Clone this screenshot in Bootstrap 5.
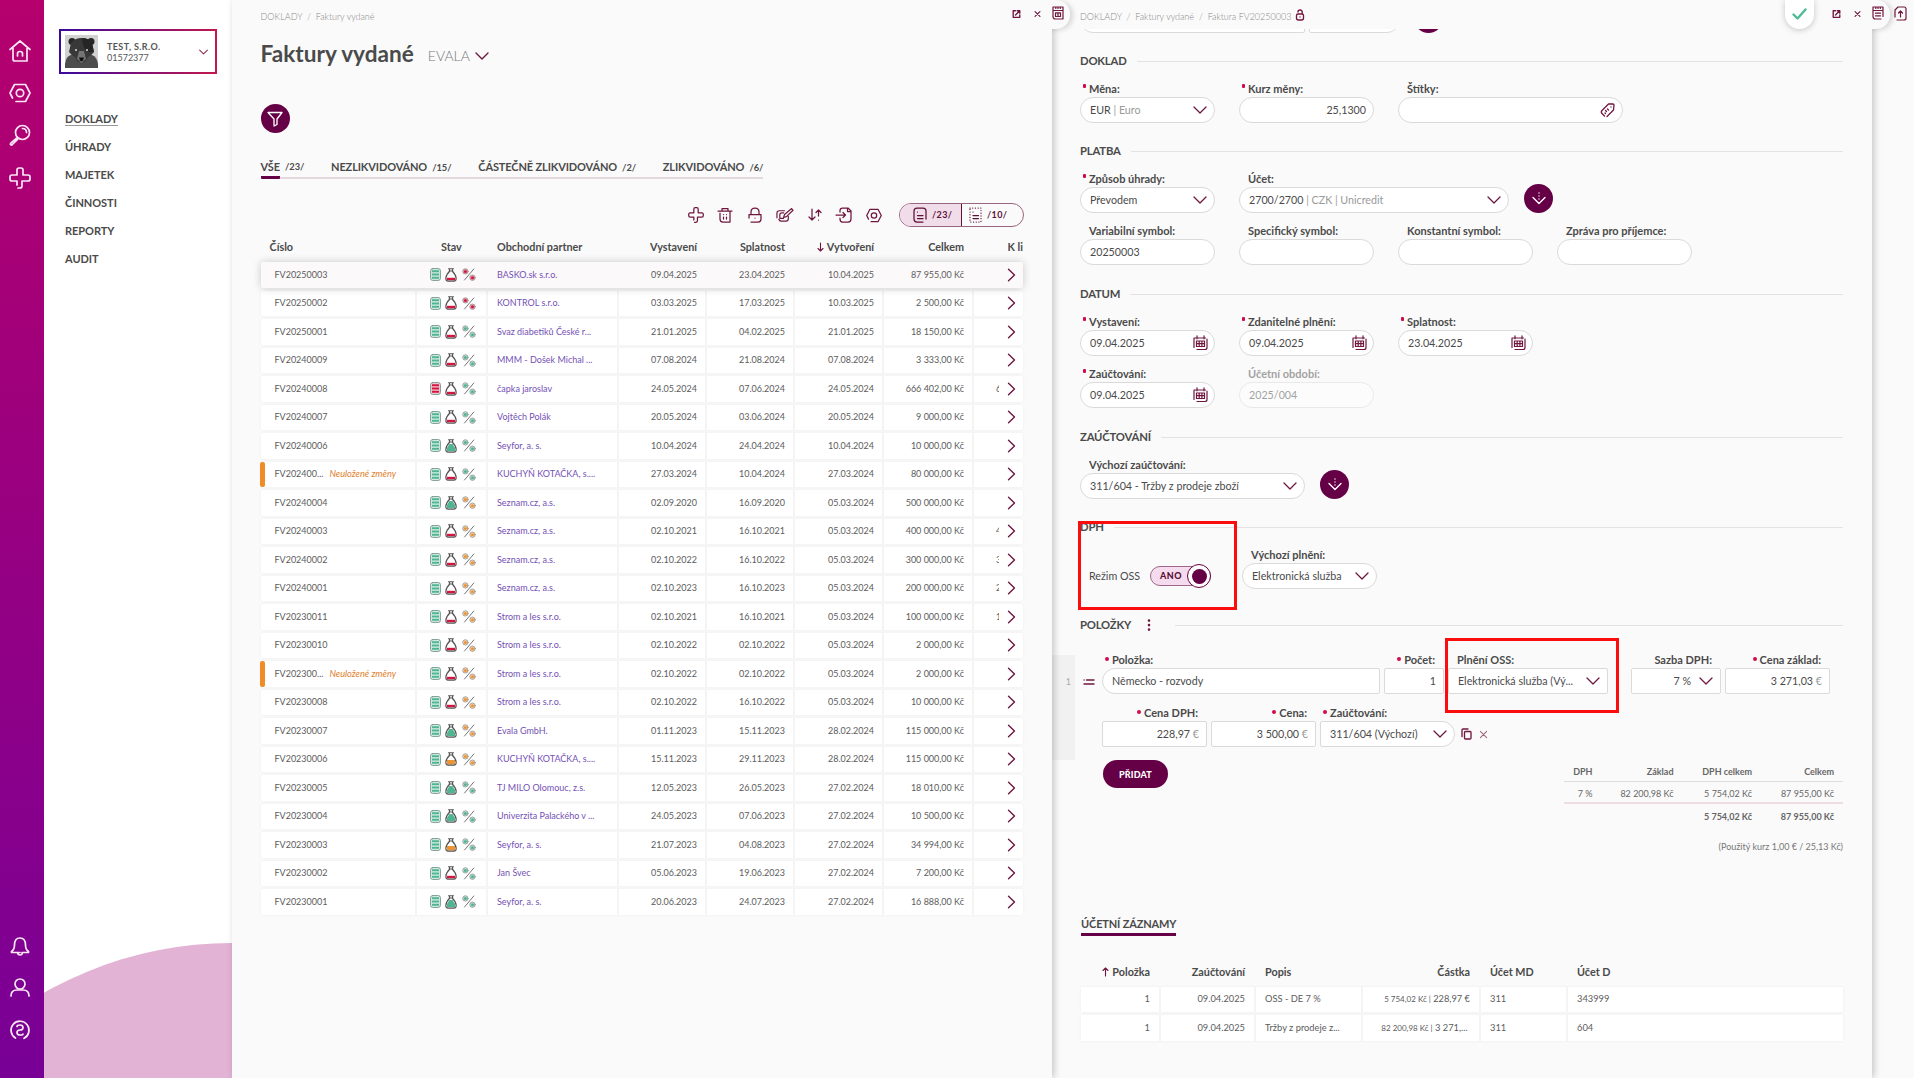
<!DOCTYPE html>
<html lang="cs">
<head>
<meta charset="utf-8">
<meta name="viewport" content="width=device-width, initial-scale=1">
<title>Faktury vydané</title>
<link href="https://cdn.jsdelivr.net/npm/bootstrap@5.3.0/dist/css/bootstrap.min.css" rel="stylesheet">
<style>
:root{--plum:#660046;--wine:#70173f;--ink:#4a4a4a;--pink:#d10a50}
body{font-family:Lato,"Open Sans",sans-serif;font-size:10.7px;line-height:16px;color:var(--ink);background:#fafafa;height:1078px;overflow:hidden}
svg{display:block;flex:none;fill:none;stroke:currentColor;stroke-width:1.35;stroke-linecap:round;stroke-linejoin:round}
.wine{color:var(--wine)}
.rail{width:44px;padding:40px 0 38px 9px;background:linear-gradient(180deg,#b5006d,#780096);color:#fbe6f6}
.rail svg{stroke-width:1.7}
.rail .top{gap:21px}.rail .bottom{gap:22px}
.side{width:188px;background:#fff;overflow:hidden}
.side .arc{width:760px;height:760px;border-radius:50%;background:#e3b3d6;left:-192px;top:943px}
.firm{width:158px;height:45px;margin:29px 0 0 15px;padding:4px 7px 4px 4px;border:2px solid;border-image:linear-gradient(90deg,#3a0a9c,#c3184e) 1;font-size:9px;line-height:11px;color:#555}
.firm b{letter-spacing:.4px}
.firm .who{margin-left:9px}
.firm .arrow{color:#8d3357;stroke-width:1.7}
.bear{stroke:none}
.menu{margin:34px 0 0 21px}
.menu a{font-size:11px;font-weight:700;letter-spacing:-.05px;color:var(--ink);text-decoration:none;height:28px;padding-top:3px}
.menu a.active span{border-bottom:1px solid #999}
.pane{width:820px;background:#fafafa;box-shadow:2px 0 7px rgba(0,0,0,.22)}
.z3{z-index:3}.z2{z-index:2}
.crumb{font-size:9px;font-weight:300;color:#888;height:34px;line-height:34px}
.corner{top:0;right:-18px;width:22px;height:29px;border-radius:0 14px 14px 0;background:#fafafa;box-shadow:3px 1px 5px rgba(0,0,0,.14);color:var(--wine);padding:6px 0 0 4px;clip-path:inset(0 -9px -9px 4px)}
.corner svg,.nexttab svg{stroke-width:1.2}
.acts{top:8px;right:11px;gap:13px;color:var(--wine)}
.okflag{top:0;right:58px;width:29px;height:29px;border-radius:0 0 15px 15px;background:#fff;box-shadow:0 1px 6px rgba(0,0,0,.22);color:#4dbb93;padding:7px 0 0 7px}
.okflag svg{stroke-width:2.4}
.nexttab{padding:6px 0 0 22px}
.list-pane{padding:0 28px 0 28.5px}
.titlebar{padding-top:5px;height:36px}
h1{font-size:22.6px;font-weight:700;line-height:28px;margin:0 0 2px}
.view{font-size:14px;font-weight:300;color:#777;margin-left:14px;padding-top:2px}
.titlebar svg{margin:2px 0 0 5px}
.round{width:29px;height:29px;border-radius:50%;background:var(--plum);color:#fff;flex:none}
.filter{margin-top:34px}
.after{margin-left:-9px}
.tabs{margin-top:25px;gap:26.7px;border-bottom:2px solid #e4d9df;font-size:11px;font-weight:700;letter-spacing:-.13px;width:max-content;height:21px;line-height:17px;white-space:nowrap}
.tabs small{font-size:9.3px;margin-left:5px;letter-spacing:0}
.tabs .on{border-bottom:3px solid var(--plum);height:21px;border-radius:1px}
.tools{gap:13.5px;color:var(--wine);height:24px;margin-top:24px}
.tools svg{stroke-width:1.25}
.tools .thick{stroke-width:1.75}
.seg{width:125px;height:24px;border:1px solid #9a6580;border-radius:12px;overflow:hidden;font-size:9px;font-weight:700;color:#5e1038;margin-left:4px;letter-spacing:.4px}
.seg svg{margin-right:5px}
.seg>div{width:61px;padding-left:7px}
.seg .on{width:62px;padding-left:13px;background:#f1dcea;border-right:1px solid #5e1038}
#list{margin-top:10px}
.lrow{display:grid;grid-template-columns:156px 71px 131.5px 88px 88px 89px 90px 49px;height:25.5px;margin-bottom:3px;width:762.5px;font-size:9px;color:#5c5c5c;background:#fff;box-shadow:0 0 3px rgba(0,0,0,.06);border-radius:2px;position:relative}
.lrow>div{display:flex;align-items:center;border-right:2px solid #f4f4f4;white-space:nowrap;padding:0 8px}
.lrow>div:nth-child(n+4){justify-content:flex-end}
.lrow>div:nth-child(1){padding-left:14px}
.lrow>div:nth-child(2){gap:4.500px;padding:0 0 0 13px}
.lrow>div:nth-child(3){color:#7451b5;padding-left:9.5px}
.lrow>div:last-child{border:0;padding:0 7px 0 0;color:#6a1540}
.lrow.sel{background:#fcf9fa;box-shadow:0 0 8px rgba(0,0,0,.2);z-index:1}
.lrow.sel>div{border-color:transparent}
.lrow.lhead{background:none;box-shadow:none;font-size:10.8px;font-weight:700;height:20px;margin:0 0 5px;color:var(--ink)}
.lrow.lhead>div{border-color:transparent;color:var(--ink)}
.lrow.lhead>div:nth-child(1){padding-left:9px}
.lrow.lhead>div:nth-child(2){padding-left:24.5px}
.lrow.lhead>div:last-child{padding:0}
.sortarrow{color:var(--wine);stroke-width:1.1;margin-right:3px}
.lrow.dirty::before{content:"";position:absolute;left:-1px;top:0;width:5px;height:100%;border-radius:2px;background:#f08c28}
.dirtynote{color:#e0812c;font-style:italic;font-size:9.2px;margin-left:6px}
.bit{width:3px;overflow:hidden;margin-right:8px;color:#5c5c5c}
.c-g{color:#4fb591}.c-r{color:#d3163f}.c-o{color:#ee9332}
.fill{fill:currentColor;stroke:none}
.detail{padding:0 29px 0 28px}
.cutclip{height:4px;overflow:hidden;margin-top:-5px;display:flex;align-items:flex-end}
.cutclip .fld{flex:none}
.cutclip .round{margin-left:14px}
.sect{height:20px;font-size:11.3px;font-weight:700;line-height:20px;letter-spacing:-.2px;margin-top:18px}
.sect::after{content:"";flex:1;height:1px;background:#e3e3e3;margin-left:10px}
.gap19{margin-top:19px}
.gap26{margin-top:26px}
.kebab{margin:0 14px 0 16px;color:var(--wine);stroke-width:2.6}
.frow{gap:24px;align-items:flex-end;margin-top:10px}
.f label{display:block;height:16px;font-weight:700;font-size:11px;padding:0 9px;position:relative;white-space:nowrap}
.rq::before{content:"";display:inline-block;width:3px;height:4px;border-radius:1px;background:var(--pink);vertical-align:5px;margin:0 3px 0 -6px}
.fld{height:26px;border:1px solid #dadada;border-radius:13px;background:#fff;padding:0 7px 0 9px;display:flex;align-items:center;justify-content:space-between;white-space:nowrap}
.fld svg{color:var(--wine);stroke-width:1.3}
.fld .calicon{margin-right:-1px;stroke-width:1.2}
.fld i{font-style:normal;color:#999}
.w135{width:135px}.w225{width:225px}.w270{width:270px}.w91{width:91px}.w105{width:105px}.w60{width:60px}.w90{width:90px}.w160{width:160px}.w278{width:278px}
.off{opacity:.5}
.sq{border-radius:2px}
.lr{border-radius:13px 2px 2px 13px}
.rr{border-radius:2px 13px 13px 2px}
.end{justify-content:flex-end}
.regime{height:26px;width:162px;padding-left:9px}
.tog{width:61px;height:20px;margin-left:10px;border:1px solid #a0678a;border-radius:10px;background:#f4dcee;font-size:9px;font-weight:900;letter-spacing:.4px;color:#5e1038;padding-left:9px;line-height:18px}
.knob{width:24px;height:24px;border-radius:50%;border:1px solid var(--plum);background:#fff;right:-1px;top:-3px}
.knob::after{content:"";position:absolute;inset:3.5px;border-radius:50%;background:var(--plum)}
.hl{border:3px solid #fb0d0d}
.hl1{left:26px;top:521px;width:158.5px;height:89px}
.hl2{left:393px;top:637.5px;width:173.5px;height:75px}
.idx{left:0;top:655px;width:23px;height:105px;background:#f1f1f1;color:#aaa;font-size:9px;padding:19px 4px 0 0;text-align:right}
.items{padding-left:22px;gap:4px;margin-top:11px}
.items.first{margin-top:17px}
.items .wide{margin-left:19px}
.items .rq::before{width:4px;height:4px;border-radius:50%;vertical-align:3px}
.drag{left:3px;top:27px;color:var(--wine)}
.ends{height:26px;margin-left:2px;gap:7px;color:var(--wine)}
.ends .del{stroke-width:.9;opacity:.65}
.foot{margin-top:13px;padding-left:23px}
.addbtn{width:65px;height:28px;border-radius:14px;background:var(--plum)!important;color:#fff!important;font-size:9px;font-weight:900;padding:1px 0 0;border:0;letter-spacing:.15px}
.sum{display:grid;grid-template-columns:38px 81px 78.5px 82px;font-size:9px;width:279.5px;text-align:right;color:#666}
.sum>*{padding-right:9px;height:22px;line-height:23px;border-bottom:1px solid #dedede}
.sum .a{border-bottom:2px solid #eddde2}
.sum .b{border:0;line-height:26px;height:23.5px}
.rate{font-size:9px;margin-top:11px;color:#777}
.subtab{margin:61px 0 0 1px;width:max-content;font-size:11px;font-weight:700;letter-spacing:-.15px;border-bottom:3px solid var(--plum);height:20px}
.entries{margin:26px 0 0 1px}
.ent{display:grid;grid-template-columns:80px 95px 107px 118px 87px 275px;width:762px;height:25.5px;margin-bottom:3px;background:#fff;font-size:9.3px;color:#5c5c5c;box-shadow:0 0 3px rgba(0,0,0,.06)}
.ent>div{padding:0 9px;border-right:2px solid #f4f4f4;display:flex;align-items:center;white-space:pre}
.ent>div:last-child{border:0}
.ent.eh{background:none;box-shadow:none;height:20px;margin-bottom:5px;font-size:10.8px;font-weight:700;color:var(--ink)}
.ent.eh>div{border-color:transparent}
.tiny{font-size:8px}
</style>
<script src="https://cdn.jsdelivr.net/npm/bootstrap@5.3.0/dist/js/bootstrap.bundle.min.js"></script>
</head>
<body>
<svg width="0" height="0" class="position-absolute">
<symbol id="chev" viewBox="0 0 14 8"><path d="M1 1l6 6 6-6"/></symbol>
<symbol id="go" viewBox="0 0 9 14"><path d="M1.500 1.200L7.500 7l-6 5.800"/></symbol>
<symbol id="plus" viewBox="0 0 22 22"><path d="M9 21h2q2 0 2-2v-5h6q2 0 2-2v-2q0-2-2-2h-5V3q0-2-2-2h-2q-2 0-2 2v5H3Q1 8 1 10v2q0 2 2 2h5v4"/></symbol>
<symbol id="cal" viewBox="0 0 15 16"><path d="M1 12.500V3h11.500M14 4v8.500q0 2-2 2H4M4 .8v3M11 .8v3M3.500 6h8v5.500h-8zM3.500 8.700h8M6.200 6v5.500M8.900 6v5.500"/></symbol>
<symbol id="hex" viewBox="0 0 22 20"><path d="M3.500 15L1 10l4.500-8.500h11L21 10l-4.500 8.500H7"/><circle cx="11" cy="10" r="3.700"/></symbol>
<symbol id="down" viewBox="0 0 16 16"><path d="M2 6.500l6 6 6-6M8 2v.1M8 5v.1M8 8v.1"/></symbol>
<symbol id="ext" viewBox="0 0 9 9"><path d="M3.500 1.200H1.200v6.600h6.600V5.500M5.200 1.200h2.600v2.600M7.500 1.500L3.500 5.500"/></symbol>
<symbol id="x" viewBox="0 0 8 8"><path d="M1.200 1.200l5.600 5.600M6.800 1.200L1.200 6.800"/></symbol>
<symbol id="docs" viewBox="0 0 12 14"><path d="M1 1v9.500Q1 13 3.500 13H11V1H1M3.800 1v1.500M6 1v1.500M8.300 1v1.500M1 4.500h10M3.500 6.800h5v3.700h-5zM6 7v3.500"/></symbol>
<symbol id="note" viewBox="0 0 12 14"><path d="M1 1v9.500Q1 13 3.500 13H9M11 10.500V1H1M3.800 1v1.500M6 1v1.500M8.300 1v1.500M1 4.500h10M3.500 7.200h5M3.500 9.800h5"/></symbol>
<symbol id="lst" viewBox="0 0 11 13"><rect x=".6" y=".6" width="9.800" height="11.800" rx="2" stroke="#7a9a90" stroke-width="1" fill="currentColor" fill-opacity=".22"/><path d="M2 3.200h7M2 6.500h7M2 9.800h7" stroke-width="1.900" stroke-linecap="butt"/></symbol>
<symbol id="bag" viewBox="0 0 12 14"><path d="M3.500.8h5M4 3h4M4.500 1v2.500Q.8 7 .8 10.500q0 2.600 2.200 2.600h6q2.200 0 2.200-2.600Q11.200 7 7.500 3.500V1" stroke="#555" stroke-width="1.100"/></symbol>
<symbol id="pct" viewBox="0 0 14 13"><path d="M11.800 1L2.500 12" stroke="#666" stroke-width=".9"/><circle cx="3.400" cy="3.400" r="2.700" stroke="#888" stroke-width=".7" fill="currentColor" fill-opacity=".4"/><circle cx="10.500" cy="9.700" r="2.700" stroke="#888" stroke-width=".7" fill="currentColor" fill-opacity=".4"/><path d="M3.400 3.400h.01M10.500 9.700h.01" stroke-width="3"/></symbol>
</svg>

<div class="d-flex vh-100">
  <aside class="rail d-flex flex-column justify-content-between">
    <div class="top d-flex flex-column">
      <svg width="22" height="22"><path d="M1 9.500L11 1l10 8.500M4 8v11q0 2 2 2h12V8.500M8.500 16v-2.500q0-2 2.500-2t2.500 2V16"/></svg>
      <svg width="22" height="20"><use href="#hex"/></svg>
      <svg width="22" height="22"><circle cx="13.500" cy="8.500" r="7"/><path d="M8.500 13.500L2 19q-1 1-.3 1.700t1.700-.2L9 15M13.500 4.500q4 0 4 4"/></svg>
      <svg width="22" height="22"><use href="#plus"/></svg>
    </div>
    <div class="bottom d-flex flex-column">
      <svg width="22" height="20"><path d="M11 16.500H2.500v-1q3-2 3-6.500 0-7 5.500-7t5.500 7q0 4.500 3 6.500v1H13M8.500 17q.5 2 2.500 2t2.500-2"/></svg>
      <svg width="22" height="20"><circle cx="11" cy="6" r="5"/><path d="M2 18q0-6 6-6h6q6 0 6 6"/></svg>
      <svg width="22" height="20"><path d="M6.500 18a9 9 0 1 1 8.500.3M8 6.500q0-1.500 3-1.500t3 2.500-3 2.500-3 2.500 3 2.500 3-1"/></svg>
    </div>
  </aside>
  <nav class="side position-relative">
    <div class="firm d-flex align-items-center">
      <svg class="bear" width="33" height="33" viewBox="0 0 33 33"><rect width="33" height="33" fill="#d2d2d2"/><path d="M0 33v-4q1-8 6-9h21q5 2 6 9v4z" fill="#4d4d4d"/><circle cx="7" cy="6.500" r="3.500" fill="#262626"/><circle cx="26" cy="6.500" r="3.500" fill="#262626"/><path d="M6 8q4-5 10.500-5T27 8l2 9q-2 3-6 5l-3 5h-7l-3-5q-4-2-6-5z" fill="#383838"/><path d="M17 3q7 0 10 5l2 9q-3 1-7-1-4-2-5-13z" fill="#252525"/><path d="M14 16h5l2 8-4.500 4-4.500-4z" fill="#747474"/><path d="M14 22.500h5l-1 3-1.500 1-1.500-1z" fill="#111"/><circle cx="11" cy="15" r="1" fill="#ddd"/><circle cx="22" cy="15" r="1" fill="#ddd"/></svg>
      <div class="who flex-fill"><b>TEST, S.R.O.</b><br>01572377</div>
      <svg class="arrow" width="9" height="6" viewBox="0 0 14 8"><path d="M1 1l6 6 6-6"/></svg>
    </div>
    <div class="menu d-flex flex-column">
      <a class="active" href="#"><span>DOKLADY</span></a><a href="#">ÚHRADY</a><a href="#">MAJETEK</a><a href="#">ČINNOSTI</a><a href="#">REPORTY</a><a href="#">AUDIT</a>
    </div>
    <div class="arc position-absolute"></div>
  </nav>

  <main class="pane list-pane position-relative z3">
    <div class="crumb">DOKLADY&nbsp; /&nbsp; Faktury vydané</div>
    <div class="acts position-absolute d-flex align-items-center"><svg width="9" height="12" viewBox="0 0 9 9"><use href="#ext"/></svg><svg width="7" height="12" viewBox="0 0 8 8"><use href="#x"/></svg></div>
    <div class="corner position-absolute"><svg width="12" height="14"><use href="#docs"/></svg></div>
    <div class="titlebar d-flex align-items-center">
      <h1>Faktury vydané</h1><span class="view">EVALA</span><svg class="wine" width="14" height="8"><use href="#chev"/></svg>
    </div>
    <div class="round filter d-flex align-items-center justify-content-center"><svg width="16" height="16"><path d="M1 1.500h14L10 8v5M7 14V8L1 1.500M10 13.500L7 15"/></svg></div>
    <div class="tabs d-flex">
      <div class="d-flex"><span class="on">VŠE</span><small>/23/</small></div><div>NEZLIKVIDOVÁNO<small>/15/</small></div><div>ČÁSTEČNĚ ZLIKVIDOVÁNO<small>/2/</small></div><div>ZLIKVIDOVÁNO<small>/6/</small></div>
    </div>
    <div class="tools d-flex align-items-center justify-content-end">
      <svg class="thick" width="16" height="16" viewBox="0 0 22 22"><use href="#plus"/></svg>
      <svg width="16" height="16"><path d="M1 4h14M5 4V1.500h6V4M3 6v6q0 3 3 3h7V4M6.500 7.500v.1M6.500 10v2M9.500 7.500v.1M9.500 10v2"/></svg>
      <svg width="16" height="16"><path d="M2 11V7.500h12V12q0 3-3 3H4M4 7V5q0-4 4-4t4 4v2M8 11v.1"/></svg>
      <svg width="18" height="16" viewBox="0 0 19 16"><path d="M9 3.500H3.500Q1 3.500 1 6v5M3 12.500q.5 2 2.500 2h5q2.500 0 2.500-2.500V9.500M8 5.800H6.500Q4 5.800 4 8v3.500h4M8 10.500l1-3 7.500-6.300L18 3l-7 6.700z"/></svg>
      <svg width="14" height="16"><path d="M4 2v11M1 10l3 3 3-3M10.500 9V3M10.500 13v.1M8 5.500L10.500 3 13 5.500"/></svg>
      <svg width="17" height="16"><path d="M5 5V3.500Q5 1 7.500 1H13l3 3v8q0 3-3 3H7.500Q5 15 5 12v-1M1 8h9.500M8 5.500L10.500 8 8 10.500M12.500 1v3.500H16"/></svg>
      <svg class="thick" width="16" height="15"><use href="#hex"/></svg>
      <div class="seg d-flex"><div class="on d-flex align-items-center"><svg width="14" height="16"><path d="M10 15H4q-3 0-3-3V4q0-3 3-3h6q3 0 3 3v8M4.500 5v.1M4.500 8.500h5.500M4.500 11.500h5.500"/></svg>/23/</div><div class="d-flex align-items-center"><svg width="13" height="16"><rect x="1" y="1" width="11" height="14" stroke-dasharray=".1 2.600"/><path d="M4 5v.1M4 8.500h5.500M4 11.500h5.500"/></svg>/10/</div></div>
    </div>
    <div id="list">
      <div class="lrow lhead"><div>Číslo</div><div>Stav</div><div>Obchodní partner</div><div>Vystavení</div><div>Splatnost</div><div><svg class="sortarrow" width="7" height="10"><path d="M3.500 1v8M1 6.500L3.500 9 6 6.500"/></svg>Vytvoření</div><div>Celkem</div><div>K li</div></div>
    </div>
  </main>

  <section class="pane detail position-relative z2">
    <div class="crumb d-flex align-items-center">DOKLADY&nbsp; /&nbsp; Faktury vydané&nbsp; /&nbsp; Faktura FV20250003<svg class="wine ms-1 mb-1" width="10" height="12"><path d="M3 5h4q1.500 0 1.500 1.500V9q0 2-2 2h-3q-2 0-2-2V6.500Q1.500 5 3 5M3 3q0-2 2-2t2.200 2v1.500M5 8v.1"/></svg></div>
    <div class="acts position-absolute d-flex align-items-center"><svg width="9" height="12" viewBox="0 0 9 9"><use href="#ext"/></svg><svg width="7" height="12" viewBox="0 0 8 8"><use href="#x"/></svg></div>
    <div class="okflag position-absolute"><svg width="15" height="14"><path d="M1.500 7.500l4 4 8-9"/></svg></div>
    <div class="corner position-absolute"><svg width="12" height="14"><use href="#note"/></svg></div>
    <div class="cutclip"><div class="fld lr w225"></div><div class="fld rr ms-1 w91"></div><div class="round"></div></div>

    <div class="sect d-flex align-items-center">DOKLAD</div>
    <div class="frow d-flex">
      <div class="f w135"><label class="rq">Měna:</label><div class="fld"><span>EUR <i>| Euro</i></span><svg width="14" height="8"><use href="#chev"/></svg></div></div>
      <div class="f w135"><label class="rq">Kurz měny:</label><div class="fld end">25,1300</div></div>
      <div class="f w225"><label>Štítky:</label><div class="fld end"><svg width="15" height="15"><path d="M7 13.500L13.500 7l.5-5q0-1-1-1H8.500L2 7.500Q.5 9 2 10.500L4.500 13M11 4v.1M5.500 7.500l1 1M7.500 6l1 1M5 10l.5.5"/></svg></div></div>
    </div>
    <div class="sect d-flex align-items-center">PLATBA</div>
    <div class="frow d-flex">
      <div class="f w135"><label class="rq">Způsob úhrady:</label><div class="fld"><span>Převodem</span><svg width="14" height="8"><use href="#chev"/></svg></div></div>
      <div class="f w270"><label>Účet:</label><div class="fld"><span>2700/2700 <i>| CZK | Unicredit</i></span><svg width="14" height="8"><use href="#chev"/></svg></div></div>
      <div class="round after d-flex align-items-center justify-content-center"><svg width="16" height="16"><use href="#down"/></svg></div>
    </div>
    <div class="frow d-flex">
      <div class="f w135"><label>Variabilní symbol:</label><div class="fld">20250003</div></div>
      <div class="f w135"><label>Specifický symbol:</label><div class="fld"></div></div>
      <div class="f w135"><label>Konstantní symbol:</label><div class="fld"></div></div>
      <div class="f w135"><label>Zpráva pro příjemce:</label><div class="fld"></div></div>
    </div>
    <div class="sect gap19 d-flex align-items-center">DATUM</div>
    <div class="frow d-flex">
      <div class="f w135"><label class="rq">Vystavení:</label><div class="fld">09.04.2025<svg class="calicon" width="15" height="16"><use href="#cal"/></svg></div></div>
      <div class="f w135"><label class="rq">Zdanitelné plnění:</label><div class="fld">09.04.2025<svg class="calicon" width="15" height="16"><use href="#cal"/></svg></div></div>
      <div class="f w135"><label class="rq">Splatnost:</label><div class="fld">23.04.2025<svg class="calicon" width="15" height="16"><use href="#cal"/></svg></div></div>
    </div>
    <div class="frow d-flex">
      <div class="f w135"><label class="rq">Zaúčtování:</label><div class="fld">09.04.2025<svg class="calicon" width="15" height="16"><use href="#cal"/></svg></div></div>
      <div class="f w135 off"><label>Účetní období:</label><div class="fld">2025/004</div></div>
    </div>
    <div class="sect gap19 d-flex align-items-center">ZAÚČTOVÁNÍ</div>
    <div class="frow d-flex">
      <div class="f w225"><label>Výchozí zaúčtování:</label><div class="fld"><span>311/604 - Tržby z prodeje zboží</span><svg width="14" height="8"><use href="#chev"/></svg></div></div>
      <div class="round after d-flex align-items-center justify-content-center"><svg width="16" height="16"><use href="#down"/></svg></div>
    </div>
    <div class="sect d-flex align-items-center">DPH</div>
    <div class="frow d-flex gap-0">
      <div class="regime d-flex align-items-center">Režim OSS<div class="tog position-relative">ANO<div class="knob position-absolute"></div></div></div>
      <div class="f w135"><label>Výchozí plnění:</label><div class="fld"><span>Elektronická služba</span><svg width="14" height="8"><use href="#chev"/></svg></div></div>
    </div>
    <div class="sect gap26 d-flex align-items-center">POLOŽKY<svg class="kebab" width="4" height="12"><path d="M2 1.500v.1M2 6v.1M2 10.500v.1"/></svg></div>
    <div class="d-flex items first position-relative">
      <svg class="drag position-absolute" width="12" height="6"><path d="M3.500 1h7.500M1 1h.1M1 5h10"/></svg>
      <div class="f w278"><label class="rq">Položka:</label><div class="fld lr">Německo - rozvody</div></div>
      <div class="f w60 text-end"><label class="rq">Počet:</label><div class="fld sq end">1</div></div>
      <div class="f w160"><label>Plnění OSS:</label><div class="fld sq"><span>Elektronická služba (Vý...</span><svg width="14" height="8"><use href="#chev"/></svg></div></div>
      <div class="f w90 wide text-end"><label>Sazba DPH:</label><div class="fld sq end">7 %<svg class="ms-2" width="14" height="8"><use href="#chev"/></svg></div></div>
      <div class="f w105 text-end"><label class="rq">Cena základ:</label><div class="fld sq end"><span>3 271,03 <i>€</i></span></div></div>
    </div>
    <div class="d-flex items">
      <div class="f w105 text-end"><label class="rq">Cena DPH:</label><div class="fld sq end"><span>228,97 <i>€</i></span></div></div>
      <div class="f w105 text-end"><label class="rq">Cena:</label><div class="fld sq end"><span>3 500,00 <i>€</i></span></div></div>
      <div class="f w135"><label class="rq">Zaúčtování:</label><div class="fld rr"><span>311/604 (Výchozí)</span><svg width="14" height="8"><use href="#chev"/></svg></div></div>
      <div class="ends d-flex align-items-center align-self-end"><svg width="11" height="12"><rect x="3.500" y="3.500" width="6.500" height="7.500" rx="1"/><path d="M1 8.500V2q0-1 1-1h5"/></svg><svg class="del" width="9" height="9" viewBox="0 0 8 8"><use href="#x"/></svg></div>
    </div>
    <div class="foot d-flex justify-content-between align-items-start">
      <button class="addbtn btn">PŘIDAT</button>
      <div class="sum"><b>DPH</b><b>Základ</b><b>DPH celkem</b><b>Celkem</b><span class="a">7 %</span><span class="a">82 200,98 Kč</span><span class="a">5 754,02 Kč</span><span class="a">87 955,00 Kč</span><span class="b"></span><span class="b"></span><b class="b">5 754,02 Kč</b><b class="b">87 955,00 Kč</b></div>
    </div>
    <div class="rate text-end">(Použitý kurz 1,00 € / 25,13 Kč)</div>
    <div class="subtab">ÚČETNÍ ZÁZNAMY</div>
    <div class="entries">
      <div class="ent eh"><div class="justify-content-end"><svg class="sortarrow" width="7" height="10"><path d="M3.500 9V1M1 3.500L3.500 1 6 3.500"/></svg>Položka</div><div class="justify-content-end">Zaúčtování</div><div>Popis</div><div class="justify-content-end">Částka</div><div>Účet MD</div><div>Účet D</div></div>
      <div class="ent"><div class="justify-content-end">1</div><div class="justify-content-end">09.04.2025</div><div>OSS - DE 7 %</div><div class="justify-content-end"><span class="tiny">5 754,02 Kč |</span> 228,97 €</div><div>311</div><div>343999</div></div>
      <div class="ent"><div class="justify-content-end">1</div><div class="justify-content-end">09.04.2025</div><div>Tržby z prodeje z...</div><div class="justify-content-end"><span class="tiny">82 200,98 Kč |</span> 3 271,... </div><div>311</div><div>604</div></div>
    </div>
    <div class="idx position-absolute">1</div>
    <div class="hl hl1 position-absolute"></div>
    <div class="hl hl2 position-absolute"></div>
  </section>
  <div class="nexttab wine"><svg width="13" height="15"><path d="M1 11V4l3-3h6q2 0 2 2v9q0 2-2 2H3M6.500 11V5M4.500 7l2-2 2 2"/></svg></div>
</div>

<script>
// number | list colour, bag colour, percent colour | partner | issued | due | created | total | start of the hidden column
const data = `FV20250003|grr|BASKO.sk s.r.o.|09.04.2025|23.04.2025|10.04.2025|87 955,00|
FV20250002|grr|KONTROL s.r.o.|03.03.2025|17.03.2025|10.03.2025|2 500,00|
FV20250001|grg|Svaz diabetiků České r...|21.01.2025|04.02.2025|21.01.2025|18 150,00|
FV20240009|grg|MMM - Došek Michal ...|07.08.2024|21.08.2024|07.08.2024|3 333,00|
FV20240008|rrg|čapka jaroslav|24.05.2024|07.06.2024|24.05.2024|666 402,00|6
FV20240007|grg|Vojtěch Polák|20.05.2024|03.06.2024|20.05.2024|9 000,00|
FV20240006|ggg|Seyfor, a. s.|10.04.2024|24.04.2024|10.04.2024|10 000,00|
FV202400...|grg|KUCHYŇ KOTAČKA, s....|27.03.2024|10.04.2024|27.03.2024|80 000,00|
FV20240004|ggo|Seznam.cz, a.s.|02.09.2020|16.09.2020|05.03.2024|500 000,00|
FV20240003|gro|Seznam.cz, a.s.|02.10.2021|16.10.2021|05.03.2024|400 000,00|4
FV20240002|gro|Seznam.cz, a.s.|02.10.2022|16.10.2022|05.03.2024|300 000,00|3
FV20240001|gro|Seznam.cz, a.s.|02.10.2023|16.10.2023|05.03.2024|200 000,00|2
FV20230011|gro|Strom a les s.r.o.|02.10.2021|16.10.2021|05.03.2024|100 000,00|1
FV20230010|gro|Strom a les s.r.o.|02.10.2022|02.10.2022|05.03.2024|2 000,00|
FV202300...|gro|Strom a les s.r.o.|02.10.2022|02.10.2022|05.03.2024|2 000,00|
FV20230008|gro|Strom a les s.r.o.|02.10.2022|16.10.2022|05.03.2024|10 000,00|
FV20230007|ggo|Evala GmbH.|01.11.2023|15.11.2023|28.02.2024|115 000,00|
FV20230006|goo|KUCHYŇ KOTAČKA, s....|15.11.2023|29.11.2023|28.02.2024|115 000,00|
FV20230005|ggg|TJ MILO Olomouc, z.s.|12.05.2023|26.05.2023|27.02.2024|18 010,00|
FV20230004|ggg|Univerzita Palackého v ...|24.05.2023|07.06.2023|27.02.2024|10 500,00|
FV20230003|gog|Seyfor, a. s.|21.07.2023|04.08.2023|27.02.2024|34 994,00|
FV20230002|grg|Jan Švec|05.06.2023|19.06.2023|27.02.2024|7 200,00|
FV20230001|ggg|Seyfor, a. s.|20.06.2023|24.07.2023|27.02.2024|16 888,00|`;
const level = {r:'M1.800 9.800h8.400v2.500H1.800z', o:'M2 8h8v4.500H2z', g:'M4.500 5h3L10 9v3.300H2V9z'};
document.getElementById('list').insertAdjacentHTML('beforeend', data.split('\n').map((line, i) => {
  const [no, st, partner, a, b, c, sum, extra] = line.split('|');
  const dirty = no.endsWith('...');
  return `<div class="lrow ${i ? '' : 'sel'} ${dirty ? 'dirty' : ''}"><div>${no}${dirty ? '<span class="dirtynote">Neuložené změny</span>' : ''}</div>
  <div><svg class="c-${st[0]}" width="11" height="13"><use href="#lst"/></svg><svg class="c-${st[1]}" width="12" height="14"><path class="fill" d="${level[st[1]]}"/><use href="#bag"/></svg><svg class="c-${st[2]}" width="14" height="13"><use href="#pct"/></svg></div>
  <div>${partner}</div><div>${a}</div><div>${b}</div><div>${c}</div><div>${sum} Kč</div><div>${extra ? `<span class="bit">${extra}</span>` : ''}<svg width="9" height="14"><use href="#go"/></svg></div></div>`;
}).join(''));
</script>
</body>
</html>
